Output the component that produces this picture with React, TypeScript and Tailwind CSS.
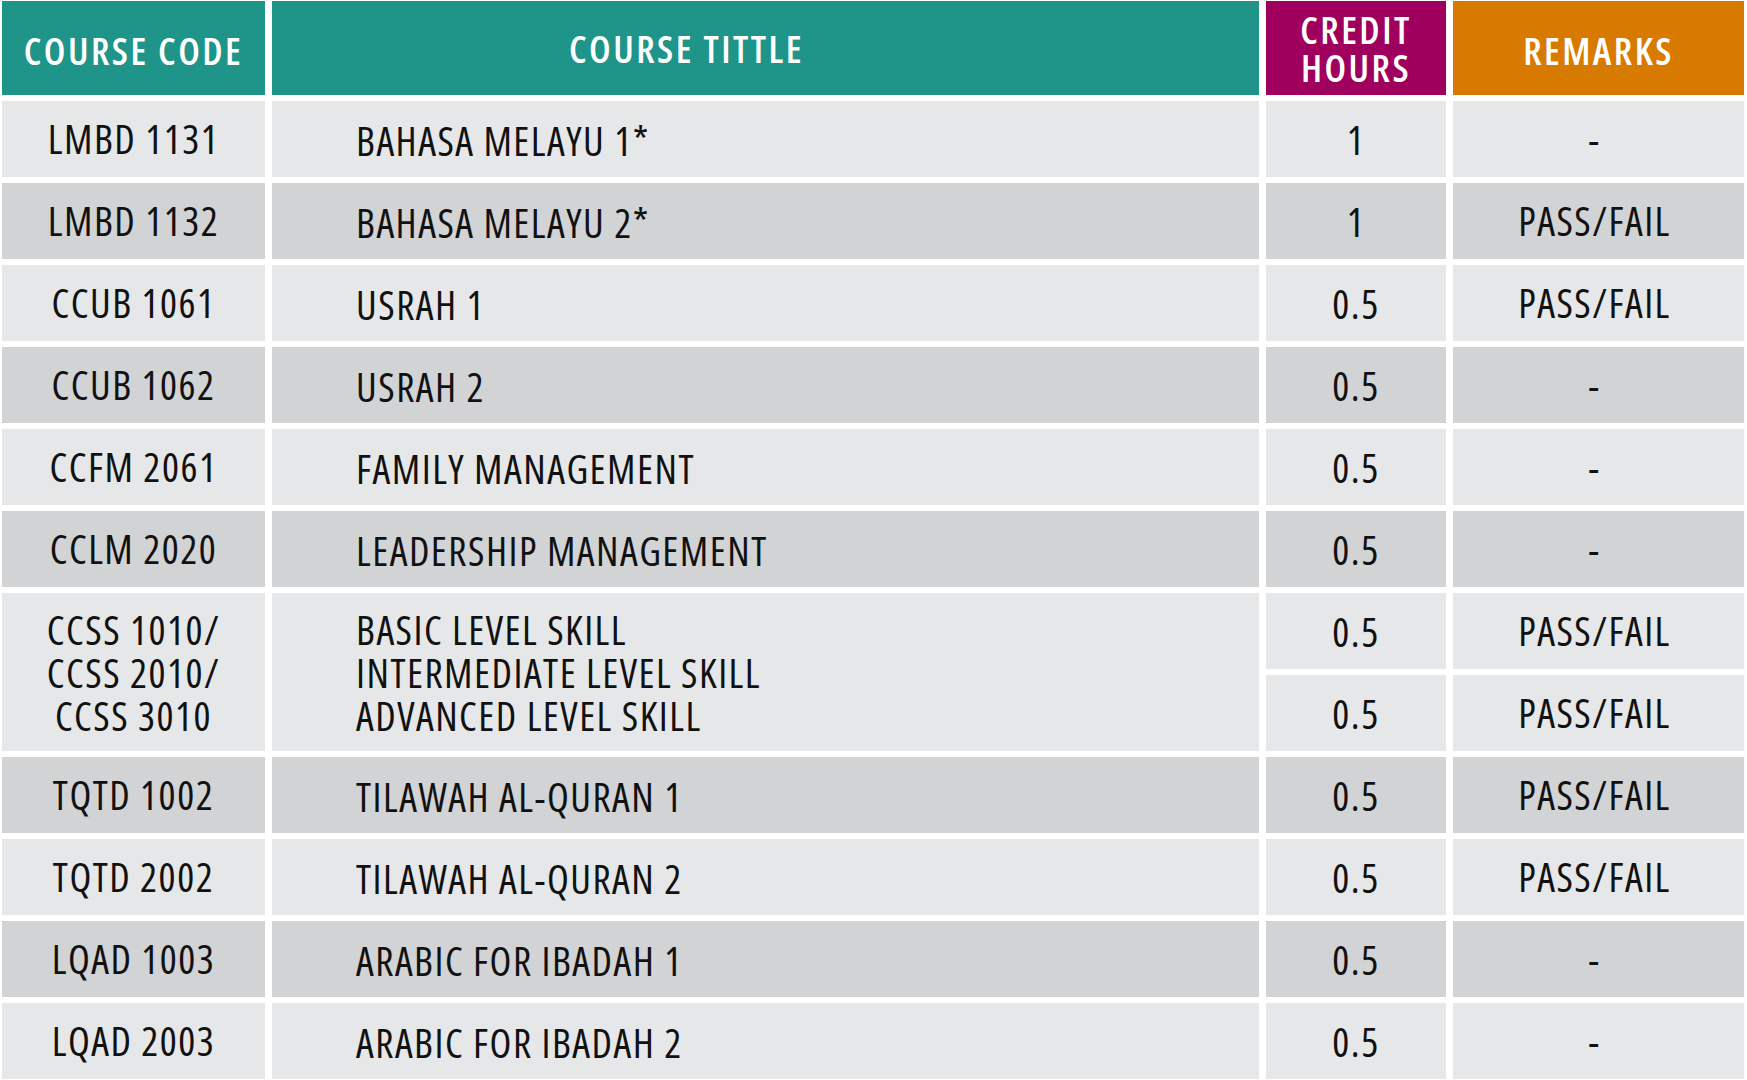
const rows = [
  { code: ["LMBD 1131"], title: ["BAHASA MELAYU 1*"], credit: "1", remark: "-" },
  { code: ["LMBD 1132"], title: ["BAHASA MELAYU 2*"], credit: "1", remark: "PASS/FAIL" },
  { code: ["CCUB 1061"], title: ["USRAH 1"], credit: "0.5", remark: "PASS/FAIL" },
  { code: ["CCUB 1062"], title: ["USRAH 2"], credit: "0.5", remark: "-" },
  { code: ["CCFM 2061"], title: ["FAMILY MANAGEMENT"], credit: "0.5", remark: "-" },
  { code: ["CCLM 2020"], title: ["LEADERSHIP MANAGEMENT"], credit: "0.5", remark: "-" },
];

const rowsAfter = [
  { code: ["TQTD 1002"], title: ["TILAWAH AL-QURAN 1"], credit: "0.5", remark: "PASS/FAIL" },
  { code: ["TQTD 2002"], title: ["TILAWAH AL-QURAN 2"], credit: "0.5", remark: "PASS/FAIL" },
  { code: ["LQAD 1003"], title: ["ARABIC FOR IBADAH 1"], credit: "0.5", remark: "-" },
  { code: ["LQAD 2003"], title: ["ARABIC FOR IBADAH 2"], credit: "0.5", remark: "-" },
];

type Row = { code: string[]; title: string[]; credit: string; remark: string };

function BodyRow({ row, dark }: { row: Row; dark: boolean }) {
  const bg = dark ? "bg-[#d1d3d4]" : "bg-[#e6e7e8]";
  return (
    <>
      <div className={`${bg} flex items-center justify-center`}>{row.code[0]}</div>
      <div className={`${bg} flex items-center pl-[84px] pt-[4px]`}>{row.title[0]}</div>
      <div className={`${bg} flex items-center justify-center pt-[2px]`}>{row.credit}</div>
      <div className={`${bg} flex items-center justify-center pr-[8px]`}>{row.remark}</div>
    </>
  );
}

export default function App() {
  return (
    <div className="w-[1747px] h-[1080px] bg-white overflow-hidden font-['Open_Sans',sans-serif] font-stretch-[80%]">
      <div className="grid grid-cols-[263px_987px_180px_291px] grid-rows-[94px_repeat(12,76px)] gap-x-[7px] gap-y-[6px] pl-[2px] pt-[1px] text-[40px] leading-[44px] tracking-[1.5px] text-[#111] whitespace-nowrap">
        <div className="bg-[#1f9488] text-white font-semibold text-[38px] tracking-[2.5px] flex items-center justify-center pt-[4px]">COURSE CODE</div>
        <div className="bg-[#1f9488] text-white font-semibold text-[38px] tracking-[2.5px] flex items-center pl-[297px]">COURSE TITTLE</div>
        <div className="bg-[#9f005d] text-white font-semibold text-[38px] tracking-[2.5px] flex flex-col items-center justify-center leading-[38px]">
          <span>CREDIT</span>
          <span>HOURS</span>
        </div>
        <div className="bg-[#d97a00] text-white font-semibold text-[38px] tracking-[2.5px] flex items-center justify-center pt-[4px]">REMARKS</div>

        {rows.map((r, i) => (
          <BodyRow key={r.code[0]} row={r} dark={i % 2 === 1} />
        ))}

        <div className="row-span-2 bg-[#e6e7e8] flex flex-col items-center justify-center leading-[43px]">
          <span>CCSS 1010/</span>
          <span>CCSS 2010/</span>
          <span>CCSS 3010</span>
        </div>
        <div className="row-span-2 bg-[#e6e7e8] flex flex-col justify-center pl-[84px] leading-[43px]">
          <span>BASIC LEVEL SKILL</span>
          <span>INTERMEDIATE LEVEL SKILL</span>
          <span>ADVANCED LEVEL SKILL</span>
        </div>
        <div className="bg-[#e6e7e8] flex items-center justify-center pt-[2px]">0.5</div>
        <div className="bg-[#e6e7e8] flex items-center justify-center pr-[8px]">PASS/FAIL</div>
        <div className="bg-[#e6e7e8] flex items-center justify-center pt-[2px]">0.5</div>
        <div className="bg-[#e6e7e8] flex items-center justify-center pr-[8px]">PASS/FAIL</div>

        {rowsAfter.map((r, i) => (
          <BodyRow key={r.code[0]} row={r} dark={i % 2 === 0} />
        ))}
      </div>
    </div>
  );
}
